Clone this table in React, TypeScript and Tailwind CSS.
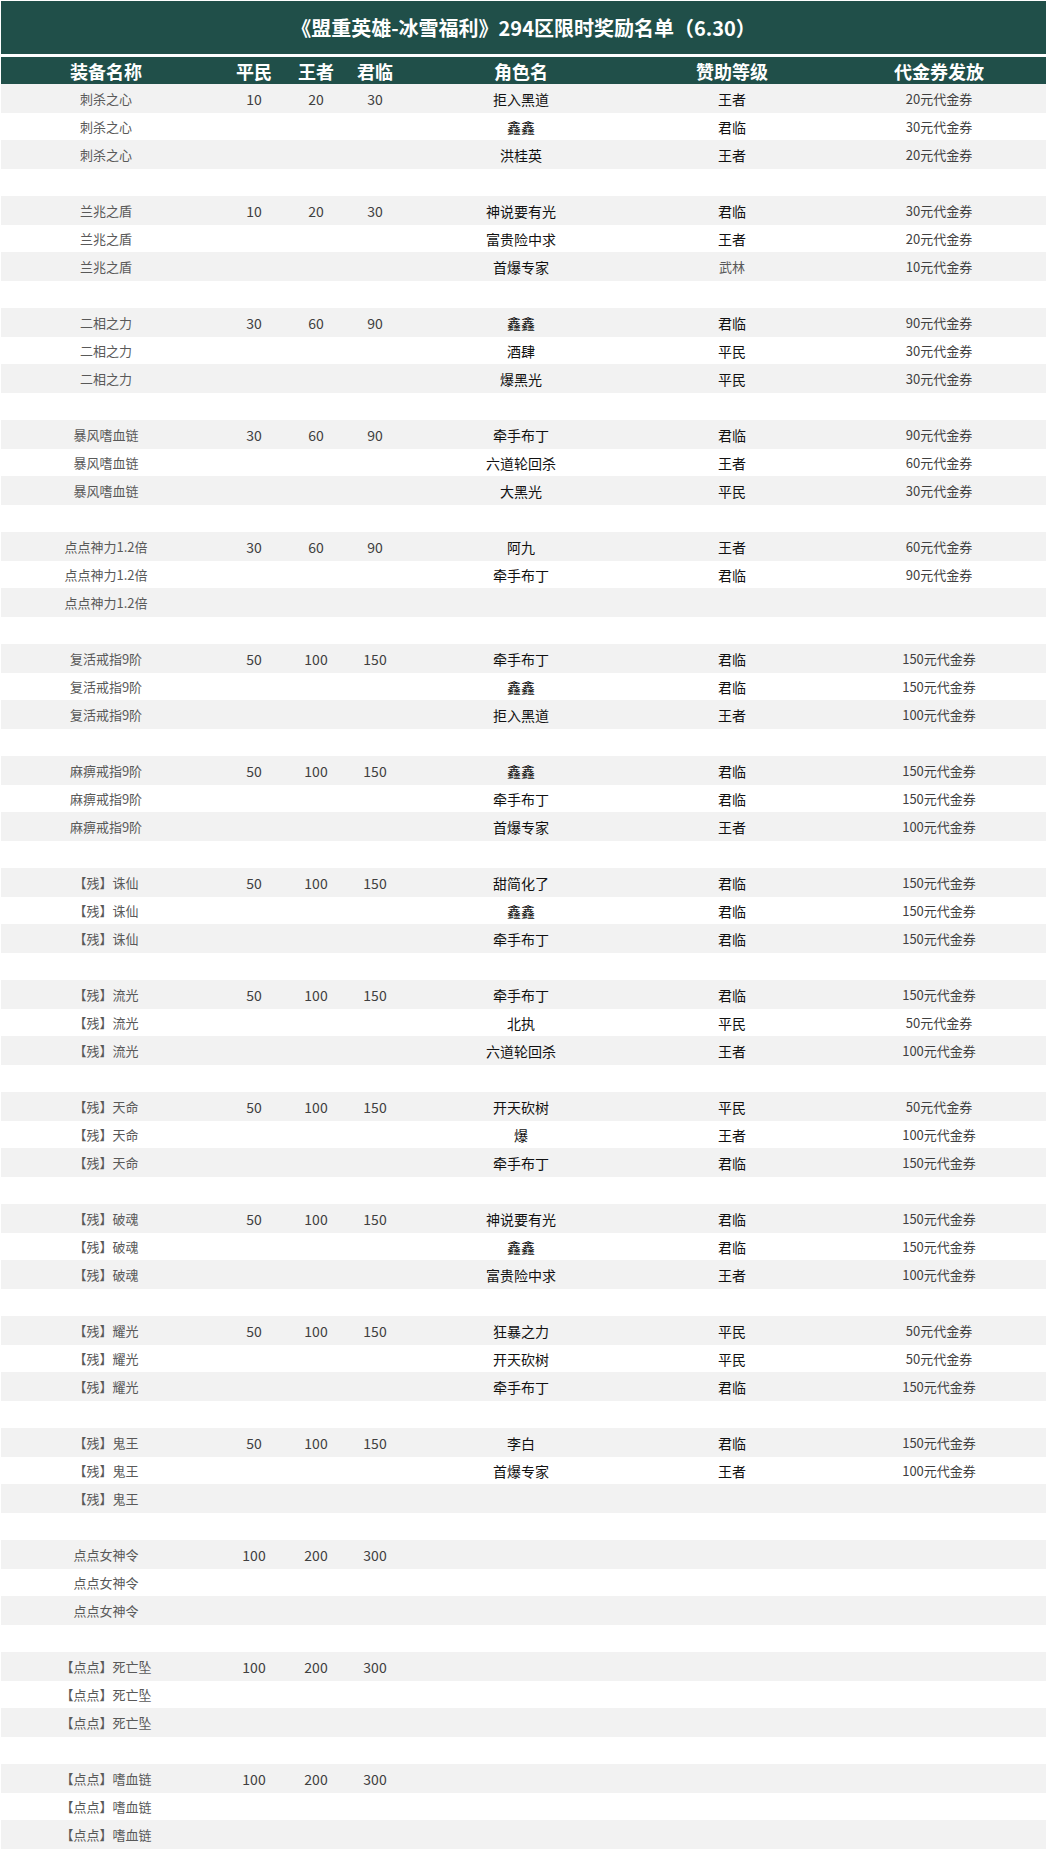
import React from "react";

type Row = { eq: string; a?: string; b?: string; c?: string; name?: string; lv?: string; lvSmall?: boolean; v?: string };

const groups: { eq: string; p: [string, string, string] | null; rows: [string, string, string][] }[] = [
  { eq: "刺杀之心", p: ["10", "20", "30"], rows: [["拒入黑道", "王者", "20元代金券"], ["鑫鑫", "君临", "30元代金券"], ["洪桂英", "王者", "20元代金券"]] },
  { eq: "兰兆之盾", p: ["10", "20", "30"], rows: [["神说要有光", "君临", "30元代金券"], ["富贵险中求", "王者", "20元代金券"], ["首爆专家", "武林", "10元代金券"]] },
  { eq: "二相之力", p: ["30", "60", "90"], rows: [["鑫鑫", "君临", "90元代金券"], ["酒肆", "平民", "30元代金券"], ["爆黑光", "平民", "30元代金券"]] },
  { eq: "暴风嗜血链", p: ["30", "60", "90"], rows: [["牵手布丁", "君临", "90元代金券"], ["六道轮回杀", "王者", "60元代金券"], ["大黑光", "平民", "30元代金券"]] },
  { eq: "点点神力1.2倍", p: ["30", "60", "90"], rows: [["阿九", "王者", "60元代金券"], ["牵手布丁", "君临", "90元代金券"], ["", "", ""]] },
  { eq: "复活戒指9阶", p: ["50", "100", "150"], rows: [["牵手布丁", "君临", "150元代金券"], ["鑫鑫", "君临", "150元代金券"], ["拒入黑道", "王者", "100元代金券"]] },
  { eq: "麻痹戒指9阶", p: ["50", "100", "150"], rows: [["鑫鑫", "君临", "150元代金券"], ["牵手布丁", "君临", "150元代金券"], ["首爆专家", "王者", "100元代金券"]] },
  { eq: "【残】诛仙", p: ["50", "100", "150"], rows: [["甜简化了", "君临", "150元代金券"], ["鑫鑫", "君临", "150元代金券"], ["牵手布丁", "君临", "150元代金券"]] },
  { eq: "【残】流光", p: ["50", "100", "150"], rows: [["牵手布丁", "君临", "150元代金券"], ["北执", "平民", "50元代金券"], ["六道轮回杀", "王者", "100元代金券"]] },
  { eq: "【残】天命", p: ["50", "100", "150"], rows: [["开天砍树", "平民", "50元代金券"], ["爆", "王者", "100元代金券"], ["牵手布丁", "君临", "150元代金券"]] },
  { eq: "【残】破魂", p: ["50", "100", "150"], rows: [["神说要有光", "君临", "150元代金券"], ["鑫鑫", "君临", "150元代金券"], ["富贵险中求", "王者", "100元代金券"]] },
  { eq: "【残】耀光", p: ["50", "100", "150"], rows: [["狂暴之力", "平民", "50元代金券"], ["开天砍树", "平民", "50元代金券"], ["牵手布丁", "君临", "150元代金券"]] },
  { eq: "【残】鬼王", p: ["50", "100", "150"], rows: [["李白", "君临", "150元代金券"], ["首爆专家", "王者", "100元代金券"], ["", "", ""]] },
  { eq: "点点女神令", p: ["100", "200", "300"], rows: [["", "", ""], ["", "", ""], ["", "", ""]] },
  { eq: "【点点】死亡坠", p: ["100", "200", "300"], rows: [["", "", ""], ["", "", ""], ["", "", ""]] },
  { eq: "【点点】嗜血链", p: ["100", "200", "300"], rows: [["", "", ""], ["", "", ""], ["", "", ""]] },
];

const rows: (Row | null)[] = [];
groups.forEach((g, gi) => {
  g.rows.forEach((r, ri) => {
    rows.push({
      eq: g.eq,
      a: ri === 0 && g.p ? g.p[0] : "",
      b: ri === 0 && g.p ? g.p[1] : "",
      c: ri === 0 && g.p ? g.p[2] : "",
      name: r[0],
      lv: r[1],
      lvSmall: r[1] === "武林",
      v: r[2],
    });
  });
  if (gi < groups.length - 1) rows.push(null);
});

const grid = "grid grid-cols-[210px_86px_38px_80px_212px_210px_204px_1fr] items-center";

export default function App() {
  return (
    <div
      className="w-[1046px] bg-white pl-px pt-px"
      style={{ fontFamily: '"Noto Sans CJK SC", "Microsoft YaHei", sans-serif' }}
    >
      <div className="flex h-[53px] items-center justify-center bg-[#204f49]">
        <span className="text-[20px] font-bold text-white leading-none">《盟重英雄-冰雪福利》294区限时奖励名单（6.30）</span>
      </div>
      <div className="h-[3px]" />
      <div className={`${grid} h-[27px] bg-[#204f49] text-[18px] font-bold leading-none text-white`}>
        <div className="text-center">装备名称</div>
        <div className="text-center">平民</div>
        <div className="text-center whitespace-nowrap">王者</div>
        <div className="text-center">君临</div>
        <div className="text-center">角色名</div>
        <div className="text-center">赞助等级</div>
        <div className="text-center">代金券发放</div>
        <div />
      </div>
      {rows.map((r, i) => {
        const grey = i % 2 === 0;
        const cls = `${grid} ${grey ? "h-[29px] bg-[#f2f2f2]" : "h-[27px] bg-white"} leading-none`;
        if (!r) return <div key={i} className={cls} />;
        return (
          <div key={i} className={cls}>
            <div className="text-center text-[13px] text-[#595959]">{r.eq}</div>
            <div className="text-center text-[14px] text-[#404040]">{r.a}</div>
            <div className="text-center text-[14px] text-[#404040] whitespace-nowrap">{r.b}</div>
            <div className="text-center text-[14px] text-[#404040]">{r.c}</div>
            <div className="text-center text-[14px] text-[#111]">{r.name}</div>
            <div className={`text-center ${r.lvSmall ? "text-[13px] text-[#595959]" : "text-[14px] text-[#111]"}`}>{r.lv}</div>
            <div className="text-center text-[13px] text-[#404040]">{r.v}</div>
            <div />
          </div>
        );
      })}
    </div>
  );
}
